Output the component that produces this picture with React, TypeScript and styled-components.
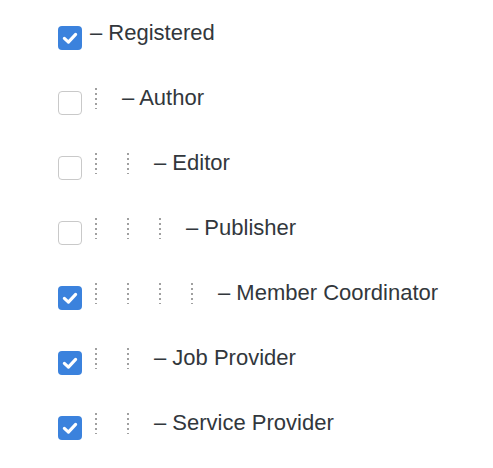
import React from "react";
import styled, { createGlobalStyle } from "styled-components";

const GlobalStyle = createGlobalStyle`
  html, body { margin: 0; padding: 0; background: #ffffff; }
  body { font-family: "Liberation Sans", Arial, sans-serif; color: #32373c; }
`;

const List = styled.ul`
  list-style: none;
  margin: 0;
  padding: 21px 0 0 58px;
  display: flex;
  flex-direction: column;
  gap: 35px;
`;

const Row = styled.li`
  display: flex;
  align-items: flex-start;
  height: 30px;
`;

const Box = styled.span<{ $checked: boolean }>`
  box-sizing: border-box;
  width: 24px;
  height: 24px;
  margin-top: 5px;
  margin-right: 8px;
  border-radius: 4px;
  flex: none;
  display: flex;
  align-items: center;
  justify-content: center;
  background: ${(p) => (p.$checked ? "#3b82dd" : "#ffffff")};
  border: ${(p) => (p.$checked ? "none" : "1.5px solid #c9c9c9")};
`;

const Guide = styled.span`
  width: 32px;
  height: 21px;
  margin-top: 2px;
  flex: none;
  background-image: repeating-linear-gradient(
    to bottom,
    #a0a0a0 0 2px,
    transparent 2px 5px
  );
  background-size: 2px 100%;
  background-position: 5px 0;
  background-repeat: no-repeat;
`;

const Label = styled.span`
  font-size: 22px;
  line-height: 24px;
  white-space: nowrap;
`;

const Check = () => (
  <svg width="18" height="18" viewBox="0 0 16 16" aria-hidden>
    <path
      d="M3 8.3 L6.6 11.6 L13 4.8"
      fill="none"
      stroke="#ffffff"
      strokeWidth="2.8"
      strokeLinecap="round"
      strokeLinejoin="round"
    />
  </svg>
);

const roles: { name: string; level: number; checked: boolean }[] = [
  { name: "Registered", level: 0, checked: true },
  { name: "Author", level: 1, checked: false },
  { name: "Editor", level: 2, checked: false },
  { name: "Publisher", level: 3, checked: false },
  { name: "Member Coordinator", level: 4, checked: true },
  { name: "Job Provider", level: 2, checked: true },
  { name: "Service Provider", level: 2, checked: true },
];

export default function App() {
  return (
    <>
      <GlobalStyle />
      <List>
        {roles.map((r) => (
          <Row key={r.name}>
            <Box $checked={r.checked}>{r.checked && <Check />}</Box>
            {Array.from({ length: r.level }).map((_, i) => (
              <Guide key={i} />
            ))}
            <Label>– {r.name}</Label>
          </Row>
        ))}
      </List>
    </>
  );
}
